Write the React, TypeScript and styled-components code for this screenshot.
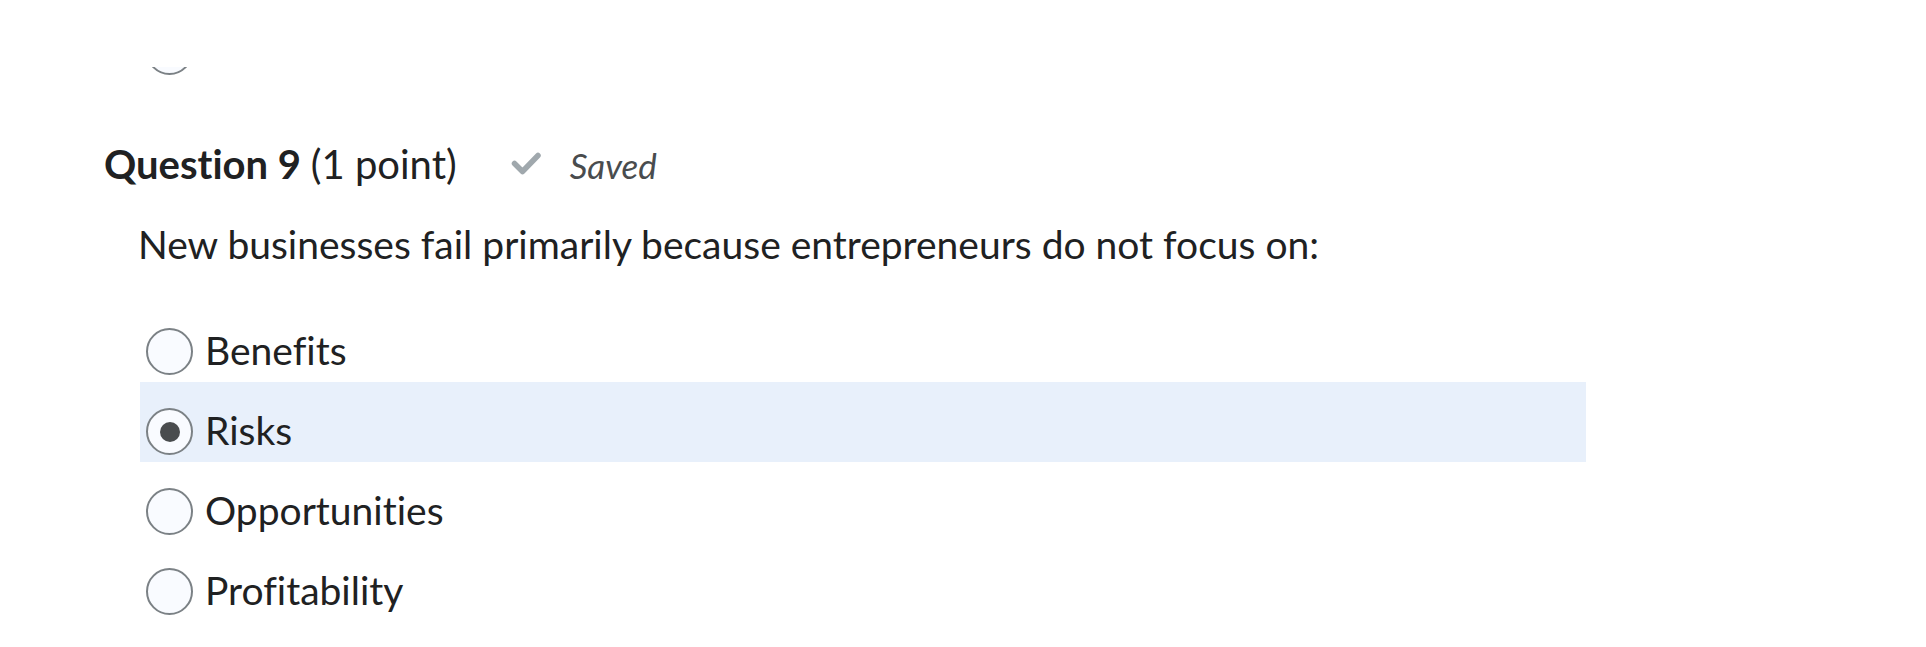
import styled, { createGlobalStyle } from "styled-components"

const GlobalStyle = createGlobalStyle`
  body {
    margin: 0;
    background: #ffffff;
    font-family: Lato, "Open Sans", sans-serif;
    font-variant-ligatures: none;
    color: #202122;
  }
`

const Page = styled.div`
  padding: 67px 0 0 104px;
`

// the previous question is scrolled off, only the bottom of its last radio shows
const PrevTail = styled.div`
  height: 8px;
  overflow: hidden;
  display: flex;
  align-items: flex-end;
  margin-left: 42px;
`

const Heading = styled.div`
  display: flex;
  align-items: baseline;
  margin-top: 65px;
  font-size: 40px;
  line-height: 1.2;
`

const Title = styled.h2`
  margin: 0;
  font-size: 40px;
  font-weight: 700;
  line-height: 1.2;
`

const Points = styled.span`
  font-weight: 400;
`

const SavedNote = styled.span`
  display: inline-flex;
  align-items: baseline;
  margin-left: 54px;
  font-size: 35px;
  font-style: italic;
  color: #494c4e;
`

const CheckIcon = styled.svg`
  width: 30px;
  height: 24px;
  margin-right: 29px;
  align-self: center;
  transform: translateY(-2px);
`

const Prompt = styled.p`
  margin: 33px 0 0 34px;
  font-size: 39px;
  line-height: 1.2;
`

const Options = styled.div`
  margin: 34px 0 0 36px;
  width: 1446px;
  display: flex;
  flex-direction: column;
`

const Option = styled.label<{ $selected?: boolean }>`
  box-sizing: border-box;
  height: 80px;
  padding: 20px 0 0 6px;
  display: flex;
  align-items: center;
  gap: 12px;
  background: ${p => (p.$selected ? "#e8f0fb" : "transparent")};
  font-size: 39px;
  line-height: 1.2;
`

const Radio = styled.span<{ $checked?: boolean }>`
  box-sizing: border-box;
  flex: none;
  width: 47px;
  height: 47px;
  border-radius: 50%;
  border: 2px solid #7b8185;
  background: #f9fbff;
  display: flex;
  align-items: center;
  justify-content: center;

  &::after {
    content: "";
    width: 20px;
    height: 20px;
    border-radius: 50%;
    background: #494c4e;
    display: ${p => (p.$checked ? "block" : "none")};
  }
`

const OptionText = styled.span`
  transform: translateY(-1px);
`

const choices = ["Benefits", "Risks", "Opportunities", "Profitability"]
const selected = "Risks"

export default function App() {
  return (
    <>
      <GlobalStyle />
      <Page>
        <PrevTail>
          <Radio />
        </PrevTail>
        <Heading>
          <Title>
            Question 9 <Points>(1 point)</Points>
          </Title>
          <SavedNote>
            <CheckIcon viewBox="0 0 30 24">
              <path
                d="M3.5 12.5 L11.5 20.5 L27 4.5"
                fill="none"
                stroke="#a0a8ad"
                strokeWidth="5.5"
                strokeLinecap="round"
                strokeLinejoin="round"
              />
            </CheckIcon>
            Saved
          </SavedNote>
        </Heading>
        <Prompt>New businesses fail primarily because entrepreneurs do not focus on:</Prompt>
        <Options>
          {choices.map(c => (
            <Option key={c} $selected={c === selected}>
              <Radio $checked={c === selected} />
              <OptionText>{c}</OptionText>
            </Option>
          ))}
        </Options>
      </Page>
    </>
  )
}
